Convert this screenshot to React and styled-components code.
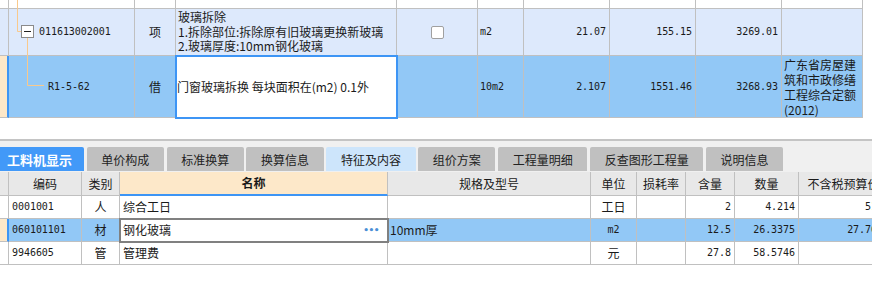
import React from 'react'
import styled, { createGlobalStyle, css } from 'styled-components'

const LINE = '#c0c0c0'
const ROW_LIGHT = '#dde9fc'
const ROW_SEL = '#92c8f6'
const STRIP = '#fde8c9'
const BLUE = '#3d95f5'

const GlobalStyle = createGlobalStyle`
  html, body {
    margin: 0;
    padding: 0;
    background: #fff;
  }
  body {
    width: 872px;
    height: 294px;
    overflow: hidden;
    font-family: "Noto Sans CJK SC", "Liberation Sans", sans-serif;
    font-size: 12px;
    color: #1a1a1a;
  }
`

const Page = styled.div`
  width: 872px;
  height: 294px;
  overflow: hidden;
  display: flex;
  flex-direction: column;
`

// codes and numbers are drawn half-width, like the song-ti digits of the original
const Num = styled.span`
  font-family: "DejaVu Sans Mono", "Liberation Mono", monospace;
  font-size: 10px;
  letter-spacing: -0.05px;
`

/* Top grid (清单 / 定额) ================================== */
const TopGrid = styled.div`
  position: relative;
  display: grid;
  grid-template-columns: 9px 126px 41px 221px 81px 46px 86px 86px 86px 81px;
  grid-template-rows: 9px 47px 62px;
  width: max-content;
`

const Cell = styled.div`
  position: relative;
  box-sizing: border-box;
  display: flex;
  align-items: center;
  justify-content: ${p => p.$align === 'right' ? 'flex-end' : p.$align === 'center' ? 'center' : 'flex-start'};
  padding: ${p => p.$pad || '0 3px'};
  border-right: 1px solid ${LINE};
  border-bottom: 1px solid ${LINE};
  background: ${p => p.$bg || '#fff'};
  white-space: nowrap;
  overflow: hidden;
  line-height: 14px;
  ${p => p.$mark && css`
    border-right: 2px solid ${BLUE};
  `}
  ${p => p.$edit && css`
    overflow: visible;
    z-index: 2;
    outline: 2px solid ${p.$edit};
    outline-offset: -1px;
    background: #fff;
  `}
  ${p => p.$wrap && css`
    white-space: normal;
    align-items: flex-start;
  `}
`

const Lines = styled.div`
  display: flex;
  flex-direction: column;
  line-height: 14.5px;
`

const Wrapped = styled.div`
  line-height: 15px;
  word-break: break-all;
  padding-top: 1px;
`

const Check = styled.span`
  display: block;
  width: 13px;
  height: 13px;
  box-sizing: border-box;
  border: 1px solid #a0a0a0;
  border-radius: 2px;
  background: #fff;
`

const Tree = styled.svg`
  position: absolute;
  left: 0;
  top: 0;
  z-index: 3;
  pointer-events: none;
`

const TreeLines = () => (
  <Tree width="60" height="118" viewBox="0 0 60 118">
    <path d="M17.5 0 V31.5 H21" stroke="#f9c98c" fill="none" />
    <path d="M27.5 38 V85.5 H44" stroke="#f9c98c" fill="none" />
    <rect x="21.5" y="25.5" width="12" height="12" fill="#fff" stroke="#8a8a8a" />
    <path d="M24 31.5 H31" stroke="#222" />
  </Tree>
)

/* Tabs ================================== */
const Spacer = styled.div`
  height: 21px;
  flex: none;
`

const Divider = styled.div`
  height: 2px;
  flex: none;
  background: #c4c4c4;
`

const TabStrip = styled.div`
  flex: none;
  height: 31px;
  box-sizing: border-box;
  padding: 6px 0 1px 0;
  background: #f0f0f0;
  display: flex;
  align-items: stretch;
  gap: 2.7px;
`

const Tab = styled.div`
  display: flex;
  align-items: center;
  justify-content: center;
  padding: 0 14.6px;
  border-radius: 2px 2px 0 0;
  background: #c0c0c0;
  color: #222;
  font-size: 12px;
  white-space: nowrap;
  ${p => p.$hl && css`
    background: #cde5fb;
  `}
  ${p => p.$active && css`
    background: #4299f8;
    color: #fff;
    font-weight: bold;
    font-size: 13px;
    padding: 0 12px 0 7px;
    border-radius: 0 2px 0 0;
  `}
`

/* Bottom grid (工料机) ================================== */
const BottomGrid = styled.div`
  display: grid;
  grid-template-columns: 9px 73px 38px 268px 203px 46px 49px 49px 64px 90px;
  grid-template-rows: 24px 23px 23px 23px;
  width: max-content;
`

const Head = styled(Cell)`
  justify-content: center;
  background: #e8e8e8;
  ${p => p.$key && css`
    background: ${STRIP};
    font-weight: bold;
    border-bottom: 2px solid ${BLUE};
  `}
`

const Dots = styled.span`
  margin-left: auto;
  margin-right: 5px;
  color: #4a8fd6;
  font-family: "DejaVu Sans", sans-serif;
  font-size: 9px;
  font-weight: bold;
  letter-spacing: -0.5px;
`

const bottomRows = [
  { code: '0001001', type: '人', name: '综合工日', spec: '', unit: '工日', qty: '2', num: '4.214', price: '51' },
  { code: '060101101', type: '材', name: '钢化玻璃', spec: '10mm厚', unit: <Num>m2</Num>, qty: '12.5', num: '26.3375', price: '27.76', sel: true },
  { code: '9946605', type: '管', name: '管理费', spec: '', unit: '元', qty: '27.8', num: '58.5746', price: '' },
]

const heads = ['编码', '类别', '名称', '规格及型号', '单位', '损耗率', '含量', '数量', '不含税预算价']

const App = () => {
  return (
    <Page>
      <GlobalStyle />
      <TopGrid>
        {Array.from({ length: 10 }).map((_, i) => <Cell key={'r0' + i} />)}

        <Cell $bg={ROW_LIGHT} />
        <Cell $bg={ROW_LIGHT} $pad="0 0 0 30px"><Num>011613002001</Num></Cell>
        <Cell $bg={ROW_LIGHT} $align="center">项</Cell>
        <Cell $bg={ROW_LIGHT} $pad="0 2px">
          <Lines>
            <span>玻璃拆除</span>
            <span>1.拆除部位:拆除原有旧玻璃更换新玻璃</span>
            <span>2.玻璃厚度:10mm钢化玻璃</span>
          </Lines>
        </Cell>
        <Cell $bg={ROW_LIGHT} $align="center"><Check /></Cell>
        <Cell $bg={ROW_LIGHT} $pad="0 2px"><Num>m2</Num></Cell>
        <Cell $bg={ROW_LIGHT} $align="right" $pad="0 3px"><Num>21.07</Num></Cell>
        <Cell $bg={ROW_LIGHT} $align="right" $pad="0 3px"><Num>155.15</Num></Cell>
        <Cell $bg={ROW_LIGHT} $align="right" $pad="0 3px"><Num>3269.01</Num></Cell>
        <Cell $bg={ROW_LIGHT} />

        <Cell $bg={STRIP} $mark />
        <Cell $bg={ROW_SEL} $pad="0 0 0 39px"><Num>R1-5-62</Num></Cell>
        <Cell $bg={ROW_SEL} $align="center">借</Cell>
        <Cell $edit={BLUE} $pad="0 1px">门窗玻璃拆换 每块面积在(m2) 0.1外</Cell>
        <Cell $bg={ROW_SEL} />
        <Cell $bg={ROW_SEL} $pad="0 2px"><Num>10m2</Num></Cell>
        <Cell $bg={ROW_SEL} $align="right" $pad="0 3px"><Num>2.107</Num></Cell>
        <Cell $bg={ROW_SEL} $align="right" $pad="0 3px"><Num>1551.46</Num></Cell>
        <Cell $bg={ROW_SEL} $align="right" $pad="0 3px"><Num>3268.93</Num></Cell>
        <Cell $bg={ROW_SEL} $wrap $pad="0 2px">
          <Wrapped>广东省房屋建筑和市政修缮工程综合定额(2012)</Wrapped>
        </Cell>
        <TreeLines />
      </TopGrid>

      <Spacer />
      <Divider />

      <TabStrip>
        <Tab $active>工料机显示</Tab>
        <Tab>单价构成</Tab>
        <Tab>标准换算</Tab>
        <Tab>换算信息</Tab>
        <Tab $hl>特征及内容</Tab>
        <Tab>组价方案</Tab>
        <Tab>工程量明细</Tab>
        <Tab>反查图形工程量</Tab>
        <Tab>说明信息</Tab>
      </TabStrip>

      <BottomGrid>
        <Head />
        {heads.map((h, i) => (
          <Head key={h} $key={i === 2}>{h}</Head>
        ))}
        {bottomRows.map(r => {
          const bg = r.sel ? ROW_SEL : '#fff'
          return (
            <React.Fragment key={r.code}>
              <Cell $bg={r.sel ? STRIP : '#fff'} $mark={r.sel} />
              <Cell $bg={bg} $pad="0 3px"><Num>{r.code}</Num></Cell>
              <Cell $bg={bg} $align="center">{r.type}</Cell>
              {r.sel ? (
                <Cell $edit="#808080" $pad="0 3px">
                  {r.name}
                  <Dots>•••</Dots>
                </Cell>
              ) : (
                <Cell $bg={bg} $pad="0 3px">{r.name}</Cell>
              )}
              <Cell $bg={bg} $pad="0 2px">{r.spec}</Cell>
              <Cell $bg={bg} $align="center">{r.unit}</Cell>
              <Cell $bg={bg} />
              <Cell $bg={bg} $align="right" $pad="0 3px"><Num>{r.qty}</Num></Cell>
              <Cell $bg={bg} $align="right" $pad="0 3px"><Num>{r.num}</Num></Cell>
              <Cell $bg={bg} $align="right" $pad="0 11px 0 0"><Num>{r.price}</Num></Cell>
            </React.Fragment>
          )
        })}
      </BottomGrid>
    </Page>
  )
}

export default App
